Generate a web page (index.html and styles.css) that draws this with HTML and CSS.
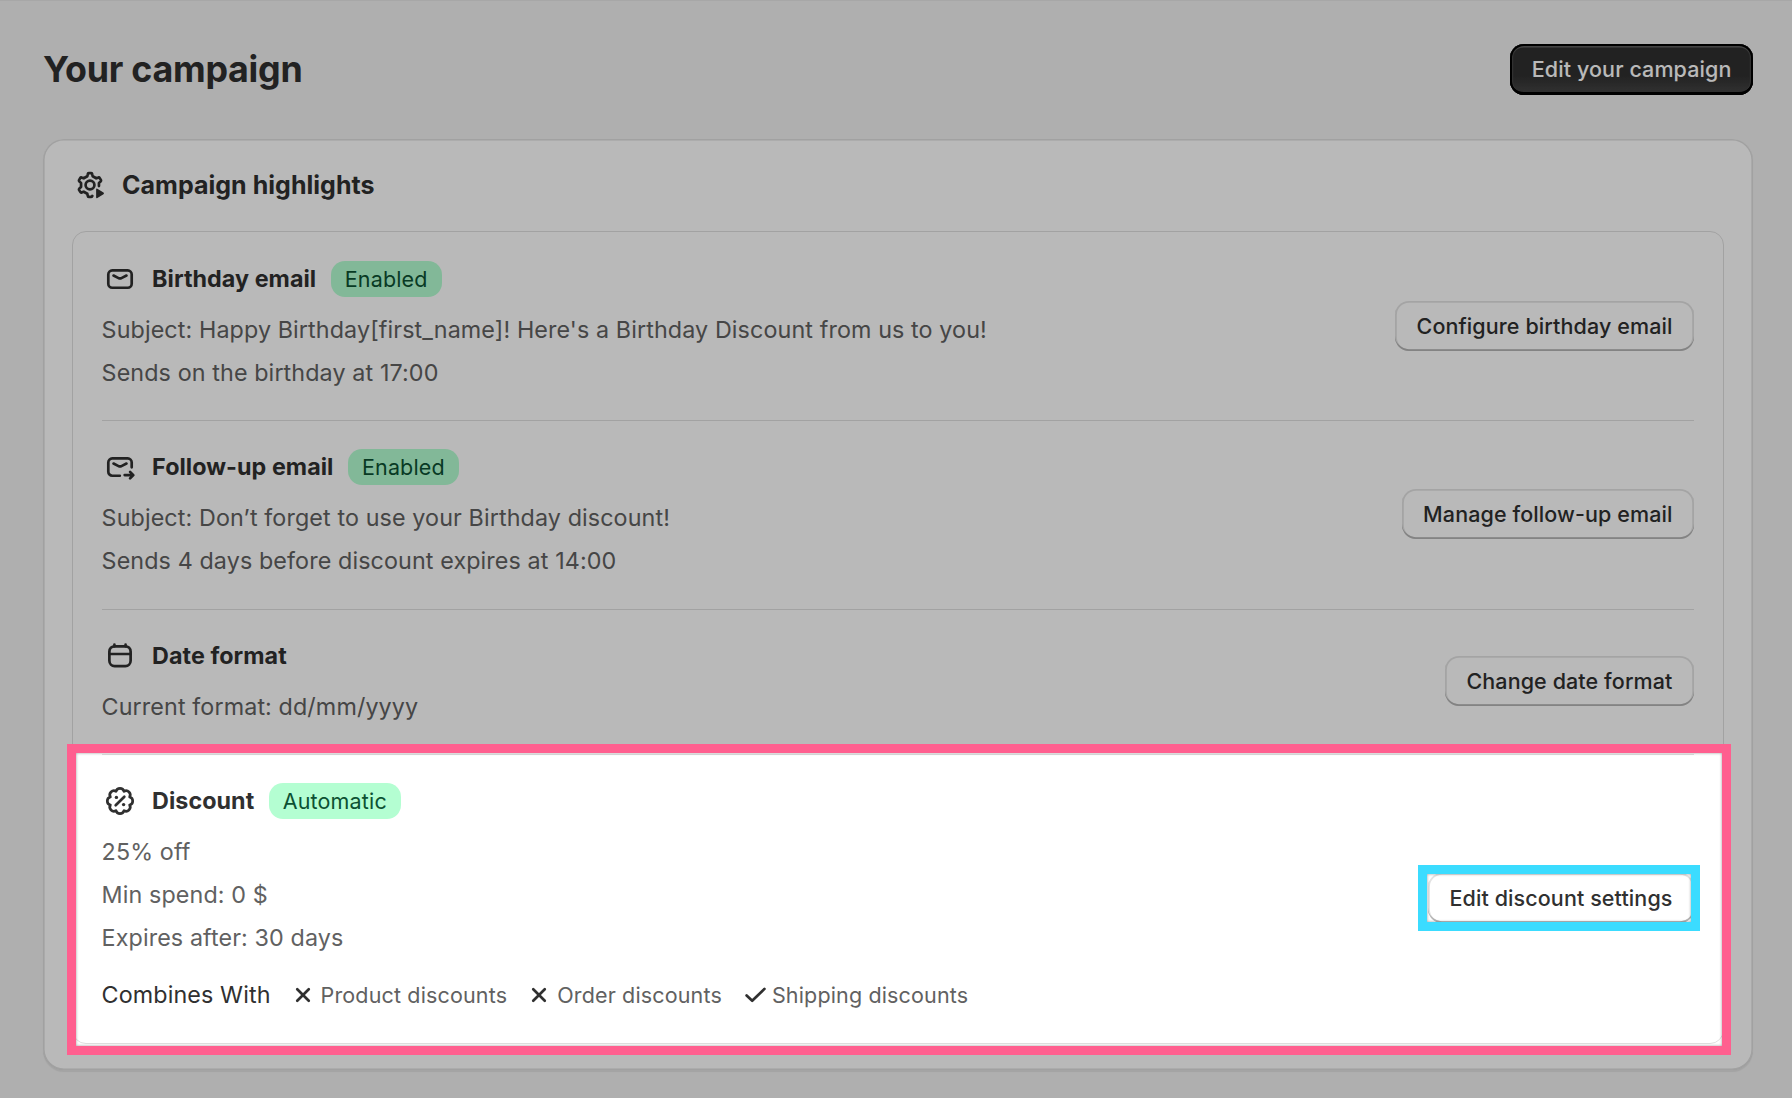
FILE: index.html
```html
<!DOCTYPE html>
<html lang="en">
<head>
    <meta charset="UTF-8">
    <meta name="viewport" content="width=device-width, initial-scale=1.0">
    <title>Your campaign</title>
    <link rel="stylesheet" href="styles.css">
</head>
<body>
    <div class="page">
        <header class="page-header">
            <h1>Your campaign</h1>
            <button class="btn btn-primary">Edit your campaign</button>
        </header>

        <main class="card">
            <div class="card-header">
                <svg class="icon" viewBox="0 0 20 20">
                    <path d="M11.3 16.1Q11.16 16.6 10.7 16.6H9.3Q8.84 16.6 8.75 16L8.51 14.88L6.52 13.73L5.4 14.1Q4.87 14.31 4.6 13.85L3.9 12.7Q3.7 12.29 4.1 11.95L5.03 11.15V8.85L4.1 8.05Q3.7 7.71 3.9 7.3L4.6 6.15Q4.87 5.69 5.4 5.9L6.52 6.27L8.51 5.12L8.75 4Q8.84 3.4 9.3 3.4H10.7Q11.16 3.4 11.25 4L11.49 5.12L13.48 6.27L14.6 5.9Q15.13 5.69 15.4 6.15L16.1 7.3Q16.3 7.71 15.9 8.05L14.97 8.85V10.6"/>
                    <circle cx="10" cy="10" r="2.45"/>
                    <path class="solid" d="M13.4 12.5v4.3q0 .8.7.4l3.4-2.1q.6-.45 0-.9l-3.4-2.1q-.7-.4-.7.4z"/>
                </svg>
                <h2>Campaign highlights</h2>
            </div>

            <div class="list">
                <section class="row">
                    <div class="info">
                        <div class="row-title">
                            <svg class="icon" viewBox="0 0 20 20">
                                <rect x="3.5" y="5.25" width="13" height="9.6" rx="2.2"/>
                                <path d="M6.4 8.1l2.8 1.4q.8.4 1.6 0l2.8-1.4"/>
                            </svg>
                            <h3>Birthday email</h3>
                            <span class="badge">Enabled</span>
                        </div>
                        <p>Subject: Happy Birthday[first_name]! Here's a Birthday Discount from us to you!</p>
                        <p>Sends on the birthday at 17:00</p>
                    </div>
                    <button class="btn">Configure birthday email</button>
                </section>

                <section class="row">
                    <div class="info">
                        <div class="row-title">
                            <svg class="icon" viewBox="0 0 20 20">
                                <path d="M9.9 14.85H5.7A2.2 2.2 0 0 1 3.5 12.65V7.45A2.2 2.2 0 0 1 5.7 5.25H14.3A2.2 2.2 0 0 1 16.5 7.45V10.2"/>
                                <path d="M6.4 8.1l2.8 1.4q.8.4 1.6 0l2.8-1.4M12.6 14.5h4.4M15.6 12.7l1.8 1.8-1.8 1.8"/>
                            </svg>
                            <h3>Follow-up email</h3>
                            <span class="badge">Enabled</span>
                        </div>
                        <p>Subject: Don’t forget to use your Birthday discount!</p>
                        <p>Sends 4 days before discount expires at 14:00</p>
                    </div>
                    <button class="btn">Manage follow-up email</button>
                </section>

                <section class="row">
                    <div class="info">
                        <div class="row-title">
                            <svg class="icon" viewBox="0 0 20 20">
                                <rect x="4.1" y="4.6" width="11.8" height="11" rx="2.9"/>
                                <path d="M4.1 8.9h11.8M6.9 3.7v.9M13.1 3.7v.9"/>
                            </svg>
                            <h3>Date format</h3>
                        </div>
                        <p>Current format: dd/mm/yyyy</p>
                    </div>
                    <button class="btn">Change date format</button>
                </section>

                <section class="row">
                    <div class="info">
                        <div class="row-title">
                            <svg class="icon" viewBox="0 0 20 20">
                                <path d="M12.22 4.64A2.3 2.3 0 0 1 15.36 7.78A2.3 2.3 0 0 1 15.36 12.22A2.3 2.3 0 0 1 12.22 15.36A2.3 2.3 0 0 1 7.78 15.36A2.3 2.3 0 0 1 4.64 12.22A2.3 2.3 0 0 1 4.64 7.78A2.3 2.3 0 0 1 7.78 4.64A2.3 2.3 0 0 1 12.22 4.64z"/>
                                <path d="M7.6 12.4l4.8-4.8"/>
                                <circle class="solid" cx="8" cy="8" r=".95"/>
                                <circle class="solid" cx="12" cy="12" r=".95"/>
                            </svg>
                            <h3>Discount</h3>
                            <span class="badge">Automatic</span>
                        </div>
                        <p>25% off</p>
                        <p>Min spend: 0 $</p>
                        <p>Expires after: 30 days</p>
                        <div class="combines">
                            <span class="combines-label">Combines With</span>
                            <span class="combine">
                                <svg class="icon" viewBox="0 0 20 20"><path d="M6.8 6.8l6.4 6.4M13.2 6.8l-6.4 6.4"/></svg>
                                Product discounts
                            </span>
                            <span class="combine">
                                <svg class="icon" viewBox="0 0 20 20"><path d="M6.8 6.8l6.4 6.4M13.2 6.8l-6.4 6.4"/></svg>
                                Order discounts
                            </span>
                            <span class="combine">
                                <svg class="icon" viewBox="0 0 20 20"><path d="M5.9 10.3l3.1 2.9 6.8-6.6"/></svg>
                                Shipping discounts
                            </span>
                        </div>
                    </div>
                    <button class="btn btn-marked">Edit discount settings</button>
                    <!-- highlight frame, its outer shadow dims the rest of the page -->
                    <div class="spotlight"></div>
                </section>
            </div>
        </main>
    </div>
</body>
</html>
```

FILE: styles.css
```css
* {
    margin: 0;
    padding: 0;
    box-sizing: border-box;
}

body {
    height: 1098px;
    overflow: hidden;
    background-color: #f1f1f1;
    color: #303030;
    font-family: Inter, "Liberation Sans", sans-serif;
    font-size: 23.3px;
    line-height: 36px;
}

.page {
    padding: 43px 39px 0 43px;
    border-top: 1px solid #e6e6e6;
}

.page-header {
    display: flex;
    align-items: center;
    justify-content: space-between;
    height: 51px;
    margin-bottom: 44px;
}

h1 {
    font-size: 35.8px;
    font-weight: 650;
    line-height: 43px;
    letter-spacing: -0.25px;
}

h2 {
    font-size: 25px;
    font-weight: 650;
    letter-spacing: 0.03px;
}

h3 {
    font-size: 23.3px;
    font-weight: 650;
    letter-spacing: 0.05px;
}

.card {
    height: 931px;
    padding: 28px 29px;
    background-color: #fff;
    border-radius: 21px;
    box-shadow: inset 0 0 0 1.6px #dedede, inset 0 -1px 0 #c8c8c8, 0 2px 1px rgba(26, 26, 26, 0.07);
}

.card-header {
    display: flex;
    align-items: center;
    gap: 14px;
    height: 36px;
    margin-bottom: 28px;
}

.icon {
    flex: none;
    width: 36px;
    height: 36px;
    fill: none;
    stroke: #303030;
    stroke-width: 1.5;
    stroke-linecap: round;
    stroke-linejoin: round;
}

.icon .solid {
    fill: #303030;
    stroke: none;
}

.list {
    padding: 0 29px 0 28.6px;
    border: 1px solid #e0e0e0;
    border-radius: 14px;
}

.row {
    position: relative;
    display: flex;
    align-items: center;
    justify-content: space-between;
    padding: 28px 0 29.3px;
    border-top: 1px solid #e0e0e0;
}

.row:first-child {
    border-top-color: transparent;
}

.info {
    display: flex;
    flex-direction: column;
    gap: 7px;
    letter-spacing: 0.11px;
}

.info p {
    color: #616161;
}

.row-title {
    display: flex;
    align-items: center;
    gap: 14.5px;
    height: 36px;
    margin-bottom: 8px;
}

.badge {
    padding: 0 14px;
    height: 36px;
    background-color: #b4fed2;
    border-radius: 14px;
    color: #0c5132;
    font-size: 21.5px;
    letter-spacing: 0.16px;
}

.combines {
    display: flex;
    align-items: center;
    gap: 14px;
    margin-top: 14.5px;
}

.combine {
    display: flex;
    align-items: center;
    color: #616161;
    font-size: 21.5px;
    letter-spacing: 0.15px;
}

.btn {
    flex: none;
    height: 50px;
    padding: 0 21.5px;
    border: none;
    border-radius: 14px;
    background-color: #fff;
    box-shadow: inset 0 -1.8px 0 #b5b5b5, inset 0 0 0 1.8px #e3e3e3;
    color: #303030;
    font-family: inherit;
    font-size: 21.5px;
    font-weight: 550;
    line-height: 36px;
    letter-spacing: 0.1px;
}

.btn-primary {
    height: 51px;
    padding-bottom: 2px;
    background: linear-gradient(#303030 63%, #474747);
    box-shadow: inset 0 0 0 2px #000, inset 0 -3px 0 #000, inset 0 3.6px 0 #5e5e5e, inset 0 0 0 3.2px #444;
    color: #fff;
}

/* square frame drawn over the button edge */
.btn-marked {
    position: relative;
}

.btn-marked::after {
    content: "";
    position: absolute;
    top: -8px;
    right: -6px;
    bottom: -8px;
    left: -10px;
    border: 9.5px solid #3bdcff;
    box-shadow: inset 0 0 3px rgba(0, 0, 0, 0.4);
}

.spotlight {
    position: absolute;
    top: -11px;
    right: -37px;
    bottom: -12px;
    left: -35px;
    border: 9px solid #ff5f8f;
    box-shadow: 0 0 0 2000px rgba(0, 0, 0, 0.275), inset 0 0 3px rgba(0, 0, 0, 0.4);
    pointer-events: none;
}
```
